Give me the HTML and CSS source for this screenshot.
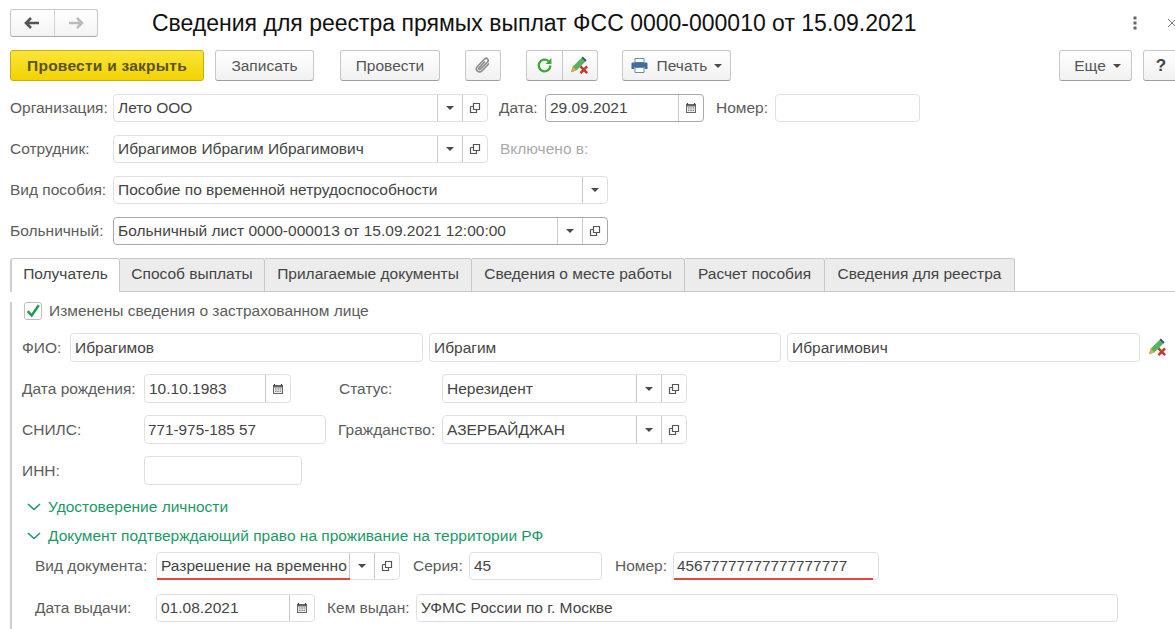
FILE: index.html
```html
<!DOCTYPE html>
<html lang="ru">
<head>
<meta charset="utf-8">
<title>Сведения для реестра прямых выплат ФСС</title>
<link rel="stylesheet" href="styles.css">
</head>
<body>
<svg class="defs" width="0" height="0">
  <symbol id="caret" viewBox="0 0 8 4"><path d="M0 0h8L4 4z" fill="#4a4a4a"/></symbol>
  <symbol id="open" viewBox="0 0 12 12"><path d="M4.500 1.500h6v6h-6z M1.500 4.500h3 M1.500 4.500v6h6v-3" fill="none" stroke="#555" stroke-width="1.200"/></symbol>
  <symbol id="cal" viewBox="0 0 12 12"><path d="M1 2h10v9H1z" fill="#666"/><path d="M2.500 1v2M9.500 1v2" stroke="#444" stroke-width="1.200"/><path d="M2 4.500h8V10H2z" fill="#eee"/><path d="M3 5.500h1.500v1H3zM5.300 5.500h1.500v1H5.300zM7.600 5.500h1.500v1H7.600zM3 7.800h1.500v1H3zM5.300 7.800h1.500v1H5.300zM7.600 7.800h1.500v1H7.600z" fill="#666"/></symbol>
  <symbol id="clear" viewBox="0 0 22 20">
    <path d="M2 17l2-6 9-9 4 4-9 9z" fill="#54b45c"/>
    <path d="M13 2l1.500-1.500 4 4L17 6z" fill="#3f4f63"/>
    <path d="M2 17l2-6 4 4z" fill="#e0a84c"/>
    <path d="M12 11l7 7M19 11l-7 7" stroke="#c8352e" stroke-width="2.600"/>
  </symbol>
  <symbol id="chev" viewBox="0 0 14 8"><path d="M1 1l6 5.500L13 1" fill="none" stroke="#1a9a68" stroke-width="1.600"/></symbol>
</svg>

<header class="titlebar">
  <div class="nav">
    <span class="nav-cell">
      <svg width="16" height="12" viewBox="0 0 16 12"><path d="M7 1L2 6l5 5M2 6h13" fill="none" stroke="#555" stroke-width="2.600"/></svg>
    </span>
    <span class="nav-cell">
      <svg width="16" height="12" viewBox="0 0 16 12"><path d="M9 1l5 5-5 5M14 6H1" fill="none" stroke="#bbb" stroke-width="2.600"/></svg>
    </span>
  </div>
  <h1 class="title">Сведения для реестра прямых выплат ФСС 0000-000010 от 15.09.2021</h1>
  <svg class="kebab" width="4" height="14" viewBox="0 0 4 14"><path d="M0.500 0.500h3v3h-3zM0.500 5.500h3v3h-3zM0.500 10.500h3v3h-3z" fill="#666"/></svg>
  <svg class="close" width="10" height="10" viewBox="0 0 10 10"><path d="M1 1l8 8M9 1l-8 8" stroke="#777" stroke-width="1"/></svg>
</header>

<div class="toolbar">
  <button class="btn btn-primary">Провести и закрыть</button>
  <button class="btn btn-save">Записать</button>
  <button class="btn btn-post">Провести</button>
  <button class="btn btn-clip">
    <svg width="18" height="18" viewBox="0 0 18 18"><path d="M15 6.500L8 14a3.200 3.200 0 0 1-4.600-4.500l7.200-7.500a2.100 2.100 0 0 1 3 3l-7 7.200a1 1 0 0 1-1.500-1.400L11 4.500" fill="none" stroke="#8e8e8e" stroke-width="1.700"/></svg>
  </button>
  <div class="btn-group">
    <button class="group-cell">
      <svg width="17" height="17" viewBox="0 0 16 16"><path d="M13.500 8a5.500 5.500 0 1 1-1.800-4.100" fill="none" stroke="#3fa535" stroke-width="2.200"/><path d="M14.500 1v5.500H9z" fill="#3fa535"/></svg>
    </button>
    <button class="group-cell">
      <svg width="21" height="19" viewBox="0 0 22 20"><use href="#clear"/></svg>
    </button>
  </div>
  <button class="btn btn-print">
    <svg width="17" height="15" viewBox="0 0 17 15"><path d="M4 0.500h9v4H4z" fill="#fff" stroke="#6a8aa8"/><path d="M0.500 5.500a1 1 0 0 1 1-1h14a1 1 0 0 1 1 1V11h-3v-2H3.500v2H0.500z" fill="#3f6f9f"/><path d="M4 9.500h9v5H4z" fill="#fff" stroke="#6a8aa8"/></svg>
    <span>Печать</span>
    <svg class="btn-caret" width="8" height="4"><use href="#caret"/></svg>
  </button>
  <button class="btn btn-more">Еще<svg class="btn-caret" width="8" height="4"><use href="#caret"/></svg></button>
  <button class="btn btn-help">?</button>
</div>

<main class="head-form">
  <div class="row row-head">
    <label class="lbl lbl-head">Организация:</label>
    <div class="field f-375"><span class="val">Лето ООО</span><span class="seg"><svg width="8" height="4"><use href="#caret"/></svg></span><span class="seg"><svg width="12" height="12"><use href="#open"/></svg></span></div>
    <label class="lbl lbl-date">Дата:</label>
    <div class="field f-159 focus"><span class="val">29.09.2021</span><span class="seg"><svg width="12" height="12"><use href="#cal"/></svg></span></div>
    <label class="lbl lbl-num">Номер:</label>
    <div class="field f-145"><span class="val"></span></div>
  </div>
  <div class="row row-head">
    <label class="lbl lbl-head">Сотрудник:</label>
    <div class="field f-375"><span class="val">Ибрагимов Ибрагим Ибрагимович</span><span class="seg"><svg width="8" height="4"><use href="#caret"/></svg></span><span class="seg"><svg width="12" height="12"><use href="#open"/></svg></span></div>
    <label class="lbl lbl-note">Включено в:</label>
  </div>
  <div class="row row-head">
    <label class="lbl lbl-head">Вид пособия:</label>
    <div class="field f-495"><span class="val">Пособие по временной нетрудоспособности</span><span class="seg"><svg width="8" height="4"><use href="#caret"/></svg></span></div>
  </div>
  <div class="row row-head">
    <label class="lbl lbl-head">Больничный:</label>
    <div class="field f-495 focus"><span class="val">Больничный лист 0000-000013 от 15.09.2021 12:00:00</span><span class="seg"><svg width="8" height="4"><use href="#caret"/></svg></span><span class="seg"><svg width="12" height="12"><use href="#open"/></svg></span></div>
  </div>
</main>

<nav class="tabs">
  <span class="tab tab-active t-110">Получатель</span>
  <span class="tab t-145">Способ выплаты</span>
  <span class="tab t-207">Прилагаемые документы</span>
  <span class="tab t-213">Сведения о месте работы</span>
  <span class="tab t-140">Расчет пособия</span>
  <span class="tab t-190">Сведения для реестра</span>
</nav>

<section class="panel">
  <div class="check-row">
    <span class="check">
      <svg width="18" height="17" viewBox="0 0 18 17"><path d="M3 8l4.500 5L15.500 1.500" fill="none" stroke="#1f9d55" stroke-width="2.800"/></svg>
    </span>
    <span class="check-text">Изменены сведения о застрахованном лице</span>
  </div>

  <div class="row row-fio">
    <label class="lbl lbl-fio">ФИО:</label>
    <div class="field f-fio"><span class="val">Ибрагимов</span></div>
    <div class="field f-fio"><span class="val">Ибрагим</span></div>
    <div class="field f-fio"><span class="val">Ибрагимович</span></div>
    <svg class="fio-clear" width="21" height="19" viewBox="0 0 22 20"><use href="#clear"/></svg>
  </div>

  <div class="row row-body">
    <label class="lbl lbl-body">Дата рождения:</label>
    <div class="field f-147"><span class="val">10.10.1983</span><span class="seg"><svg width="12" height="12"><use href="#cal"/></svg></span></div>
    <label class="lbl lbl-status">Статус:</label>
    <div class="field f-245"><span class="val">Нерезидент</span><span class="seg"><svg width="8" height="4"><use href="#caret"/></svg></span><span class="seg"><svg width="12" height="12"><use href="#open"/></svg></span></div>
  </div>
  <div class="row row-body">
    <label class="lbl lbl-body">СНИЛС:</label>
    <div class="field f-182"><span class="val num">771-975-185 57</span></div>
    <label class="lbl lbl-citizen">Гражданство:</label>
    <div class="field f-245"><span class="val">АЗЕРБАЙДЖАН</span><span class="seg"><svg width="8" height="4"><use href="#caret"/></svg></span><span class="seg"><svg width="12" height="12"><use href="#open"/></svg></span></div>
  </div>
  <div class="row row-body">
    <label class="lbl lbl-body">ИНН:</label>
    <div class="field f-158"><span class="val"></span></div>
  </div>

  <div class="group-head first"><svg width="14" height="8"><use href="#chev"/></svg><span>Удостоверение личности</span></div>
  <div class="group-head"><svg width="14" height="8"><use href="#chev"/></svg><span>Документ подтверждающий право на проживание на территории РФ</span></div>

  <div class="row row-doc">
    <label class="lbl lbl-doc">Вид документа:</label>
    <div class="field f-244 marked"><span class="val">Разрешение на временно</span><span class="seg"><svg width="8" height="4"><use href="#caret"/></svg></span><span class="seg"><svg width="12" height="12"><use href="#open"/></svg></span></div>
    <label class="lbl lbl-series">Серия:</label>
    <div class="field f-133"><span class="val">45</span></div>
    <label class="lbl lbl-docnum">Номер:</label>
    <div class="field f-206 marked-short"><span class="val num">45677777777777777777</span></div>
  </div>
  <div class="row row-doc row-issued">
    <label class="lbl lbl-doc">Дата выдачи:</label>
    <div class="field f-159"><span class="val">01.08.2021</span><span class="seg"><svg width="12" height="12"><use href="#cal"/></svg></span></div>
    <label class="lbl lbl-issuer">Кем выдан:</label>
    <div class="field f-702"><span class="val">УФМС России по г. Москве</span></div>
  </div>
</section>
</body>
</html>
```

FILE: styles.css
```css
* { box-sizing: border-box; }

html, body {
  margin: 0;
  height: 629px;
  overflow: hidden;
  background: #fff;
}

body {
  font: 15.5px/1 "Liberation Sans", Arial, sans-serif;
  color: #4b4b4b;
  padding-left: 10px;
  width: 1175px;
}

.defs { position: absolute; }

/* Title line */
.titlebar {
  display: flex;
  align-items: center;
  height: 28px;
  margin-top: 9px;
}

.nav {
  flex: none;
  display: flex;
  width: 88px;
  height: 28px;
  border: 1px solid #c8c8c8;
  border-bottom-color: #a9a9a9;
  border-radius: 3px;
  background: linear-gradient(#fff, #f3f3f3);
}

.nav-cell {
  flex: 1;
  display: flex;
  align-items: center;
  justify-content: center;
}

.nav-cell + .nav-cell { border-left: 1px solid #d4d4d4; }

.title {
  flex: none;
  margin: 0 0 0 54px;
  font-size: 23px;
  font-weight: 400;
  color: #111;
  white-space: nowrap;
}

.kebab { flex: none; margin-left: 217px; }
.close { flex: none; margin-left: 30px; }

/* Command bar */
.toolbar {
  display: flex;
  height: 31px;
  margin-top: 13px;
}

.btn {
  flex: none;
  display: flex;
  align-items: center;
  justify-content: center;
  height: 31px;
  padding: 0;
  border: 1px solid #c8c8c8;
  border-bottom-color: #a0a0a0;
  border-radius: 3px;
  background: linear-gradient(#fff, #f1f1f1);
  font: inherit;
  color: #555;
}

.btn-primary {
  width: 194px;
  background: linear-gradient(#fbe63a, #f3d200);
  border-color: #c9ad10;
  color: #5a5320;
  font-weight: 700;
  font-size: 15.5px;
  letter-spacing: 0.25px;
}

.btn-save { width: 99px; margin-left: 11px; }
.btn-post { width: 100px; margin-left: 26px; }
.btn-clip { width: 36px; margin-left: 25px; }

.btn-group {
  flex: none;
  display: flex;
  width: 72px;
  margin-left: 25px;
  border: 1px solid #c8c8c8;
  border-bottom-color: #a0a0a0;
  border-radius: 3px;
  background: linear-gradient(#fff, #f1f1f1);
}

.group-cell {
  flex: 1;
  display: flex;
  align-items: center;
  justify-content: center;
  padding: 0;
  border: 0;
  background: none;
}

.group-cell + .group-cell { border-left: 1px solid #c8c8c8; }

.btn-print { width: 109px; margin-left: 24px; }
.btn-print span { margin-left: 9px; }
.btn-caret { margin-left: 7px; }
.btn-more { width: 73px; margin-left: 328px; padding-left: 4px; }
.btn-help { width: 40px; margin-left: 11px; font-weight: 700; font-size: 17px; color: #444; padding-right: 4px; }

/* Form rows */
.row {
  display: flex;
  align-items: center;
}

.head-form { margin-top: 13px; }
.row-head { height: 28px; margin-bottom: 13px; }
.row-head:last-child { margin-bottom: 0; }

.lbl { white-space: nowrap; color: #5c5c5c; }
.lbl-head { width: 103px; }
.lbl-date { width: 46px; margin-left: 11px; }
.lbl-num { width: 59px; margin-left: 12px; }
.lbl-note { margin-left: 12px; color: #aaa; }

.field {
  flex: none;
  display: flex;
  align-items: stretch;
  height: 100%;
  border: 1px solid #e0e0e0;
  border-radius: 4px;
  background: #fff;
  position: relative;
}

.field.focus { border-color: #a8a8a8; }

.val {
  flex: 1;
  min-width: 0;
  padding-left: 4px;
  display: flex;
  align-items: center;
  white-space: nowrap;
  overflow: hidden;
  color: #444;
}

.val.num { font-size: 15.3px; padding-left: 3px; }

.seg {
  flex: none;
  width: 25px;
  display: flex;
  align-items: center;
  justify-content: center;
  border-left: 1px solid #c9c9c9;
}

.f-375 { width: 375px; }
.f-159 { width: 159px; }
.f-145 { width: 145px; }
.f-495 { width: 495px; }
.f-147 { width: 147px; }
.f-245 { width: 245px; }
.f-182 { width: 182px; }
.f-158 { width: 158px; }
.f-244 { width: 244px; }
.f-133 { width: 133px; }
.f-206 { width: 206px; }
.f-702 { width: 702px; }

/* Tabs */
.tabs {
  display: flex;
  height: 34px;
  margin-top: 13px;
  border-bottom: 1px solid #c8c8c8;
}

.tab {
  flex: none;
  display: flex;
  align-items: center;
  justify-content: center;
  height: 33px;
  padding-bottom: 3px;
  background: #ececec;
  border: 1px solid #c8c8c8;
  border-left: 0;
  border-bottom: 0;
  border-radius: 0 3px 0 0;
  color: #444;
}

.tab-active {
  height: 34px;
  background: #fff;
  border-left: 2px solid #d0d0d0;
  border-radius: 3px 3px 0 0;
  position: relative;
}

.t-110 { width: 110px; }
.t-145 { width: 145px; }
.t-207 { width: 207px; }
.t-213 { width: 213px; }
.t-140 { width: 140px; }
.t-190 { width: 190px; }

/* Tab body */
.panel {
  border-left: 2px solid #d0d0d0;
  padding-left: 10px;
  height: 340px;
}

.check-row {
  display: flex;
  align-items: center;
  height: 18px;
  margin-top: 10px;
  margin-left: 2px;
}

.check {
  flex: none;
  width: 18px;
  height: 18px;
  border: 1px solid #bdbdbd;
  border-radius: 3px;
  display: flex;
  align-items: center;
  justify-content: center;
}

.check-text { margin-left: 7px; color: #5c5c5c; }

.row-fio { height: 29px; margin-top: 13px; }
.lbl-fio { width: 48px; }
.f-fio { width: 353px; margin-right: 6px; }
.f-fio + .f-fio { width: 352px; }
.f-fio + .f-fio + .f-fio { width: 353px; margin-right: 0; }
.fio-clear { flex: none; margin-left: 7px; }

.row-body { height: 29px; margin-top: 12px; }
.lbl-body { width: 122px; }
.lbl-status { width: 103px; margin-left: 48px; }
.lbl-citizen { width: 104px; margin-left: 12px; }

.group-head {
  display: flex;
  align-items: center;
  gap: 7px;
  height: 16px;
  margin-top: 13px;
  color: #1a9a68;
  padding-left: 5px;
}

.group-head svg { flex: none; }
.group-head.first { margin-top: 14px; }

.row-doc { height: 28px; margin-top: 8px; padding-left: 13px; }
.row-issued { margin-top: 14px; }
.lbl-doc { width: 121px; }
.lbl-series { width: 56px; margin-left: 13px; }
.lbl-docnum { width: 58px; margin-left: 13px; }
.lbl-issuer { width: 89px; margin-left: 12px; }

/* Red emphasis drawn under the two document values */
.marked::after,
.marked-short::after {
  content: "";
  position: absolute;
  left: 0;
  bottom: -1px;
  height: 2px;
  background: #e8443c;
}

.marked::after { width: 193px; }
.marked-short::after { width: 199px; }
```
